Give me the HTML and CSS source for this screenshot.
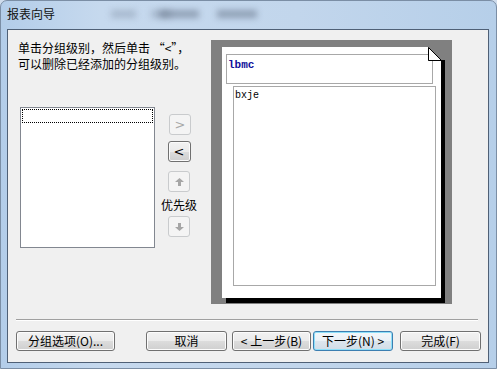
FILE: index.html
```html
<!DOCTYPE html>
<html lang="zh">
<head>
    <meta charset="UTF-8">
    <title>报表向导</title>
    <link rel="stylesheet" href="styles.css">
</head>
<body>
    <div class="window">
        <div class="titlebar">
            <span class="blob b1"></span>
            <span class="blob b2"></span>
            <span class="blob b3"></span>
            <span class="blob b4"></span>
            <span class="title">报表向导</span>
        </div>
        <div class="client">
            <div class="main">
                <div class="left">
                    <p class="hint">单击分组级别，然后单击 “&lt;”，<br>可以删除已经添加的分组级别。</p>
                    <div class="pick">
                        <div class="list">
                            <div class="list-focus"></div>
                        </div>
                        <div class="arrows">
                            <button class="mini first" disabled>&gt;</button>
                            <button class="mini active">&lt;</button>
                            <button class="mini up" disabled>
                                <svg width="9" height="8" viewBox="0 0 9 8"><path d="M4.5 0 L9 4 L6 4 L6 8 L3 8 L3 4 L0 4 Z" fill="#a6a6a6"/></svg>
                            </button>
                            <span class="prio">优先级</span>
                            <button class="mini down" disabled>
                                <svg width="9" height="8" viewBox="0 0 9 8"><path d="M4.5 8 L9 4 L6 4 L6 0 L3 0 L3 4 L0 4 Z" fill="#a6a6a6"/></svg>
                            </button>
                        </div>
                    </div>
                </div>
                <div class="preview">
                    <div class="page">
                        <svg class="fold" width="17" height="14" viewBox="0 0 17 14">
                            <rect x="0" y="0" width="17" height="14" fill="#808080"/>
                            <path d="M0.5 0.5 L0.5 13.5 L13.5 13.5 Z" fill="#fff" stroke="#000" stroke-width="1"/>
                            <rect x="13" y="13" width="4" height="1" fill="#000"/>
                        </svg>
                        <div class="group-head">lbmc</div>
                        <div class="detail">bxje</div>
                    </div>
                </div>
            </div>
            <div class="sep"></div>
            <div class="footer">
                <button class="btn opts">分组选项(O)...</button>
                <button class="btn cancel">取消</button>
                <button class="btn prev">&lt; 上一步(B)</button>
                <button class="btn next default">下一步(N) &gt;</button>
                <button class="btn finish">完成(F)</button>
            </div>
        </div>
    </div>
</body>
</html>
```

FILE: styles.css
```css
body {
    margin: 0;
    background: #cfdcec;
    font-family: "Noto Sans CJK SC", "Noto Sans", sans-serif;
    font-size: 12px;
    color: #000;
}

.window {
    width: 497px;
    height: 369px;
    box-sizing: border-box;
    border-radius: 7px 7px 0 0;
    border: 1px solid #7b8ea5;
    background: linear-gradient(90deg, #b3cde9 0%, #c6d9ee 20%, #c2d6ec 60%, #b6cfe9 100%);
    overflow: hidden;
}

.titlebar {
    position: relative;
    height: 28px;
}

.title {
    position: absolute;
    left: 6px;
    top: 5px;
    font-size: 12px;
    line-height: 16px;
    color: #111;
}

.blob {
    position: absolute;
    top: 9px;
    height: 8px;
    background: #8c9bb0;
    filter: blur(3px);
    opacity: 0.5;
}

.b1 { left: 110px; width: 25px; }
.b2 { left: 150px; width: 20px; }
.b3 { left: 158px; width: 40px; background: #5d6b80; }
.b4 { left: 216px; width: 40px; background: #5d6b80; }

.client {
    margin-left: 6px;
    width: 482px;
    height: 334px;
    box-sizing: border-box;
    border: 1px solid #4f6076;
    background: #f0f0f0;
}

.main {
    display: flex;
    padding-top: 10px;
    height: 264px;
}

.left {
    width: 193px;
    margin-left: 10px;
}

.hint {
    margin: 0;
    line-height: 16px;
    white-space: nowrap;
}

.pick {
    display: flex;
    margin-top: 35px;
}

.list {
    width: 135px;
    height: 141px;
    margin-left: 2px;
    box-sizing: border-box;
    border: 1px solid #828790;
    background: #fff;
    padding: 1px 1px 0 1px;
}

.list-focus {
    height: 14px;
    border: 1px dotted #000;
    box-sizing: border-box;
}

.arrows {
    width: 36px;
    margin-left: 6px;
    display: flex;
    flex-direction: column;
    align-items: center;
}

.mini {
    width: 22px;
    height: 21px;
    padding: 0;
    box-sizing: border-box;
    border: 1px solid #c9cbcd;
    border-radius: 3px;
    background: #f4f4f4;
    color: #a8a8a8;
    font-family: "DejaVu Sans", sans-serif;
    font-size: 13px;
    line-height: 18px;
    display: flex;
    align-items: center;
    justify-content: center;
}

.mini.first { margin-top: 7px; margin-left: 2px; }

.mini.active {
    margin-top: 6px;
    width: 23px;
    border-color: #707070;
    background: linear-gradient(#f2f2f2 0%, #ebebeb 50%, #dddddd 50%, #cfcfcf 100%);
    box-shadow: inset 0 0 0 1px #fbfbfb;
    color: #000;
}

.mini.up { margin-top: 9px; }

.prio {
    margin-top: 5px;
    line-height: 15px;
    white-space: nowrap;
}

.mini.down { margin-top: 4px; }

.preview {
    width: 241px;
    height: 264px;
    box-sizing: border-box;
    background: #808080;
    padding: 7px 0 0 11px;
}

.page {
    position: relative;
    width: 219px;
    height: 251px;
    background: #fff;
    box-shadow: 4px 5px 0 #000;
    padding-top: 7px;
    box-sizing: border-box;
}

.fold {
    position: absolute;
    top: 0;
    right: -4px;
}

.group-head {
    width: 207px;
    height: 30px;
    margin-left: 4px;
    box-sizing: border-box;
    border: 1px solid #a8a8a8;
    padding: 4px 0 0 1px;
    font-family: "Liberation Mono", monospace;
    font-weight: bold;
    font-size: 11px;
    line-height: 13px;
    color: #10109a;
}

.detail {
    width: 203px;
    height: 200px;
    margin: 2px 0 0 11px;
    box-sizing: border-box;
    border: 1px solid #a8a8a8;
    padding: 3px 0 0 1px;
    font-family: "Liberation Mono", monospace;
    font-size: 10px;
    line-height: 12px;
}

.sep {
    margin: 15px 0 0 8px;
    width: 462px;
    height: 1px;
    background: #a0a0a0;
    border-bottom: 1px solid #fff;
}

.footer {
    display: flex;
    margin-top: 10px;
    margin-left: 8px;
}

.btn {
    height: 20px;
    padding: 0;
    box-sizing: border-box;
    border: 1px solid #707070;
    border-radius: 3px;
    background: linear-gradient(#f2f2f2 0%, #ebebeb 50%, #dddddd 50%, #cfcfcf 100%);
    box-shadow: inset 0 0 0 1px #fcfcfc;
    font-family: "Noto Sans CJK SC", sans-serif;
    font-size: 12px;
    line-height: 16px;
    color: #000;
    white-space: nowrap;
}

.opts { width: 99px; }
.cancel { width: 81px; margin-left: 31px; }
.prev { width: 79px; margin-left: 5px; }
.next { width: 80px; margin-left: 2px; }
.finish { width: 81px; margin-left: 7px; }

.default {
    border-color: #3c7fb1;
    box-shadow: inset 0 0 0 1px #8ee0f9;
    background: linear-gradient(#f3f7fa 0%, #eaf1f6 50%, #dde6ee 50%, #d2dde7 100%);
}
```
